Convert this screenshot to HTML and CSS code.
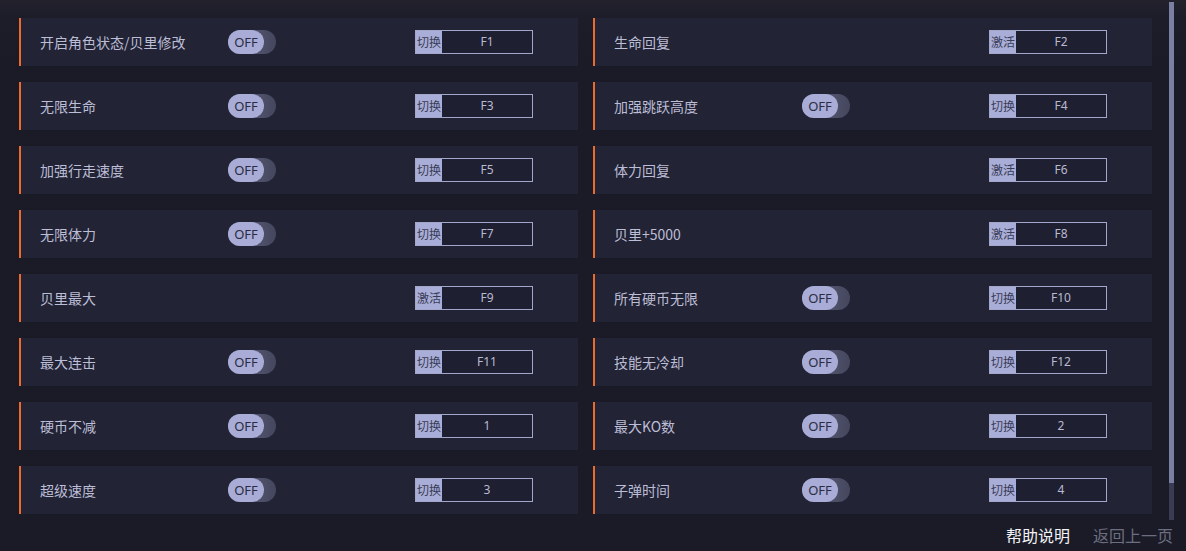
FILE: index.html
```html
<!DOCTYPE html>
<html lang="zh-CN">
<head>
<meta charset="utf-8">
<title>修改器</title>
<link rel="stylesheet" href="styles.css">
</head>
<body>
<div class="page">
  <div class="grid">
    <div class="row"><span class="label">开启角色状态/贝里修改</span><span class="slot"><span class="toggle"><span class="knob">OFF</span></span></span><span class="key"><span class="kind">切换</span><span class="val">F1</span></span></div>
    <div class="row"><span class="label">生命回复</span><span class="slot"></span><span class="key"><span class="kind">激活</span><span class="val">F2</span></span></div>

    <div class="row"><span class="label">无限生命</span><span class="slot"><span class="toggle"><span class="knob">OFF</span></span></span><span class="key"><span class="kind">切换</span><span class="val">F3</span></span></div>
    <div class="row"><span class="label">加强跳跃高度</span><span class="slot"><span class="toggle"><span class="knob">OFF</span></span></span><span class="key"><span class="kind">切换</span><span class="val">F4</span></span></div>

    <div class="row"><span class="label">加强行走速度</span><span class="slot"><span class="toggle"><span class="knob">OFF</span></span></span><span class="key"><span class="kind">切换</span><span class="val">F5</span></span></div>
    <div class="row"><span class="label">体力回复</span><span class="slot"></span><span class="key"><span class="kind">激活</span><span class="val">F6</span></span></div>

    <div class="row"><span class="label">无限体力</span><span class="slot"><span class="toggle"><span class="knob">OFF</span></span></span><span class="key"><span class="kind">切换</span><span class="val">F7</span></span></div>
    <div class="row"><span class="label">贝里+5000</span><span class="slot"></span><span class="key"><span class="kind">激活</span><span class="val">F8</span></span></div>

    <div class="row"><span class="label">贝里最大</span><span class="slot"></span><span class="key"><span class="kind">激活</span><span class="val">F9</span></span></div>
    <div class="row"><span class="label">所有硬币无限</span><span class="slot"><span class="toggle"><span class="knob">OFF</span></span></span><span class="key"><span class="kind">切换</span><span class="val">F10</span></span></div>

    <div class="row"><span class="label">最大连击</span><span class="slot"><span class="toggle"><span class="knob">OFF</span></span></span><span class="key"><span class="kind">切换</span><span class="val">F11</span></span></div>
    <div class="row"><span class="label">技能无冷却</span><span class="slot"><span class="toggle"><span class="knob">OFF</span></span></span><span class="key"><span class="kind">切换</span><span class="val">F12</span></span></div>

    <div class="row"><span class="label">硬币不减</span><span class="slot"><span class="toggle"><span class="knob">OFF</span></span></span><span class="key"><span class="kind">切换</span><span class="val">1</span></span></div>
    <div class="row"><span class="label">最大KO数</span><span class="slot"><span class="toggle"><span class="knob">OFF</span></span></span><span class="key"><span class="kind">切换</span><span class="val">2</span></span></div>

    <div class="row"><span class="label">超级速度</span><span class="slot"><span class="toggle"><span class="knob">OFF</span></span></span><span class="key"><span class="kind">切换</span><span class="val">3</span></span></div>
    <div class="row"><span class="label">子弹时间</span><span class="slot"><span class="toggle"><span class="knob">OFF</span></span></span><span class="key"><span class="kind">切换</span><span class="val">4</span></span></div>
  </div>
  <div class="footer">
    <span class="link primary">帮助说明</span>
    <span class="link muted">返回上一页</span>
  </div>
  <div class="scrollbar"><div class="thumb"></div></div>
</div>
</body>
</html>
```

FILE: styles.css
```css
html, body {
  margin: 0;
  padding: 0;
}
body {
  width: 1186px;
  height: 551px;
  overflow: hidden;
  background: #1a1b27;
  font-family: "Microsoft YaHei", "Noto Sans CJK SC", "Noto Sans", sans-serif;
}
.page {
  position: relative;
  height: 551px;
  padding: 18px 0 0 19px;
  box-sizing: border-box;
  background: linear-gradient(180deg, #22212c 0px, #1d1d2a 18px, #1a1b27 60px);
}
.grid {
  display: grid;
  grid-template-columns: 559px 559px;
  grid-auto-rows: 48px;
  column-gap: 15px;
  row-gap: 16px;
}
.row {
  display: flex;
  align-items: center;
  background: #222334;
  border-left: 2px solid #ec6a2c;
  padding-left: 19px;
}
.label {
  width: 188px;
  flex: none;
  font-size: 14px;
  color: #bcbdd6;
  white-space: nowrap;
}
.slot {
  width: 187px;
  flex: none;
  display: flex;
  align-items: center;
}
.toggle {
  width: 48px;
  height: 24px;
  border-radius: 12px;
  background: linear-gradient(90deg, #5a5c78 0%, #4e5069 70%, #44465e 100%);
  display: flex;
}
.knob {
  width: 36px;
  height: 24px;
  border-radius: 12px;
  background: #a8acd6;
  color: #2b2c42;
  font-family: "Noto Sans", "Liberation Sans", sans-serif;
  font-size: 13px;
  line-height: 24px;
  text-align: center;
}
.key {
  width: 118px;
  height: 24px;
  box-sizing: border-box;
  border: 1px solid #a3a7cc;
  background: #1e1f30;
  display: flex;
  flex: none;
}
.kind {
  width: 26px;
  flex: none;
  background: #a9aed8;
  color: #3a3c56;
  font-size: 12px;
  line-height: 22px;
  text-align: center;
  white-space: nowrap;
  overflow: hidden;
}
.val {
  flex: 1;
  text-align: center;
  color: #b9bad2;
  font-family: "Noto Sans", "Liberation Sans", sans-serif;
  font-size: 12px;
  line-height: 22px;
}
.footer {
  display: flex;
  justify-content: flex-end;
  gap: 23px;
  margin-top: 10px;
  padding-right: 13px;
}
.link {
  font-size: 16px;
  line-height: 22px;
}
.primary {
  color: #f2f2f6;
}
.muted {
  color: #6c6e80;
}
.scrollbar {
  position: absolute;
  left: 1169px;
  top: 2px;
  width: 5px;
  height: 518px;
  background: #3a3c54;
}
.thumb {
  height: 481px;
  background: #7b7fa3;
}
```
